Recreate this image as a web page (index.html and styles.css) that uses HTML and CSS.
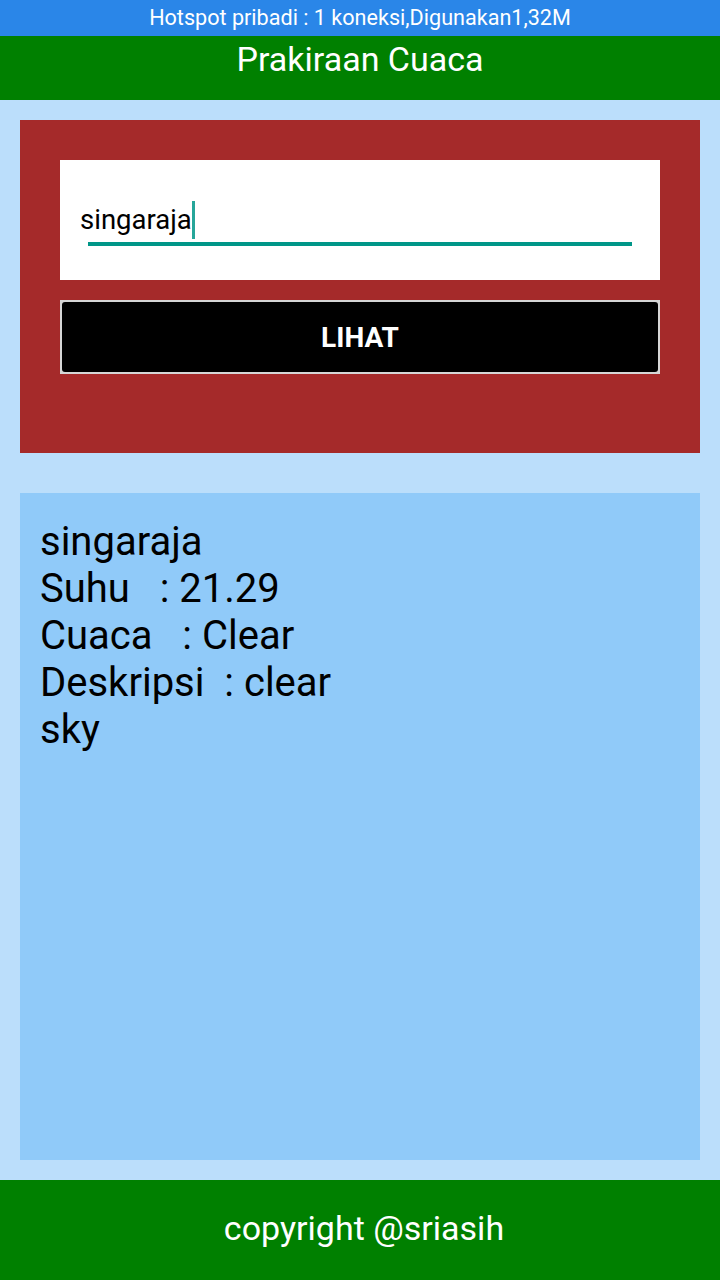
FILE: index.html
```html
<!DOCTYPE html>
<html>
<head>
<meta charset="utf-8">
<link rel="stylesheet" href="styles.css">
</head>
<body>
<div class="statusbar">Hotspot pribadi : 1 koneksi,Digunakan1,32M</div>
<header class="appbar">Prakiraan Cuaca</header>
<main class="content">
  <section class="form-card">
    <div class="input-box">
      <div class="input-field">
        <span class="input-text">singaraja</span><span class="cursor"></span>
      </div>
    </div>
    <div class="btn-frame">
      <button class="btn">LIHAT</button>
    </div>
  </section>
  <section class="result">
    <div class="line">singaraja</div>
    <div class="line">Suhu&nbsp;&nbsp;&nbsp;: 21.29</div>
    <div class="line">Cuaca&nbsp;&nbsp;&nbsp;: Clear</div>
    <div class="line">Deskripsi&nbsp;&nbsp;: clear</div>
    <div class="line">sky</div>
  </section>
</main>
<footer class="footer">copyright @sriasih</footer>
</body>
</html>
```
FILE: styles.css
```css
* { box-sizing: border-box; }
html, body {
  margin: 0;
  padding: 0;
  width: 720px;
  height: 1280px;
  overflow: hidden;
  font-family: Roboto, "Noto Sans", sans-serif;
}
body {
  display: flex;
  flex-direction: column;
  background: #bbdefb;
}
.statusbar {
  height: 36px;
  background: #2a86e8;
  color: #fff;
  font-size: 21.6px;
  line-height: 36px;
  text-align: center;
}
.appbar {
  height: 64px;
  background: #008000;
  color: #fff;
  font-size: 34px;
  line-height: 46px;
  text-align: center;
}
.content {
  flex: 1;
  display: flex;
  flex-direction: column;
  padding: 20px;
  gap: 40px;
}
.form-card {
  height: 333px;
  background: #a52a2a;
  padding: 40px;
  display: flex;
  flex-direction: column;
  gap: 20px;
}
.input-box {
  height: 120px;
  background: #fff;
  padding: 40px 28px 0 20px;
}
.input-field {
  position: relative;
  height: 46px;
  display: flex;
  align-items: flex-start;
}
.input-field::after {
  content: "";
  position: absolute;
  left: 8px;
  right: 0;
  bottom: 0;
  height: 4px;
  background: #009688;
}
.input-text {
  font-size: 27.5px;
  line-height: 40px;
  color: #000;
}
.cursor {
  width: 3px;
  height: 38px;
  margin-top: 1px;
  background: #26a69a;
}
.btn-frame {
  height: 74px;
  background: #d6d6d6;
  padding: 2px;
}
.btn {
  width: 100%;
  height: 100%;
  border: 0;
  border-radius: 3px;
  background: #000;
  color: #fff;
  font-family: Roboto, "Noto Sans", sans-serif;
  font-weight: bold;
  font-size: 28px;
}
.result {
  flex: 1;
  background: #90caf9;
  padding: 25px 20px;
}
.line {
  font-size: 40px;
  line-height: 47px;
  color: #000;
}
.footer {
  height: 100px;
  background: #008000;
  color: #fff;
  font-size: 34px;
  line-height: 96px;
  text-align: center;
  padding-left: 8px;
}
```
